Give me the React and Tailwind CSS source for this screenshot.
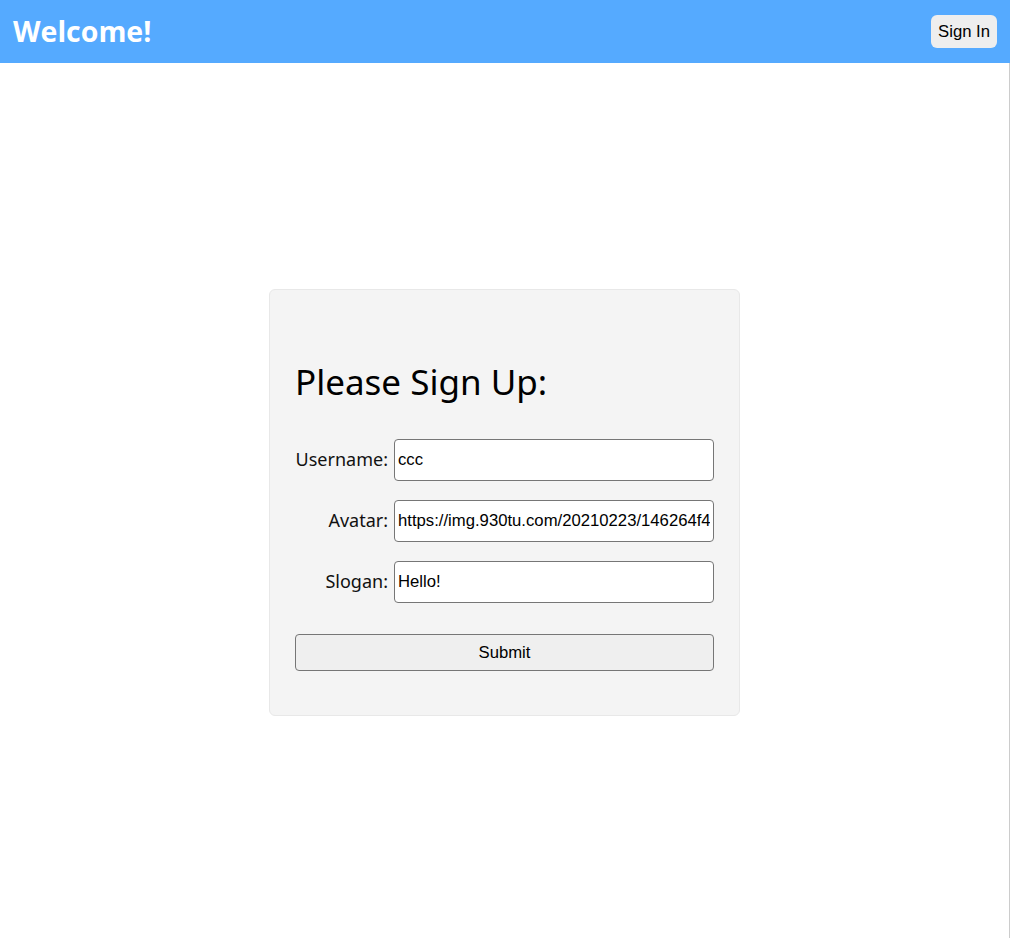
import React from 'react'

function Header() {
    return (
        <div className="flex h-[63px] items-center justify-between bg-[#55aaff] pl-[13px] pr-[13px]">
            <h1 className="font-['Open_Sans',sans-serif] text-[28.5px] font-bold text-white">Welcome!</h1>
            <button className="h-[33px] rounded-md bg-[#eeeeee] px-[7px] font-['Liberation_Sans',Arial,sans-serif] text-[16.7px] text-black">
                Sign In
            </button>
        </div>
    )
}

function Field({ label, value }) {
    return (
        <div className="flex items-center">
            <label className="w-[99px] pr-[6px] text-right text-[18px] text-[#111]">{label}</label>
            <input
                readOnly
                value={value}
                className="h-[42px] w-[320px] rounded border border-[#767676] bg-white px-[3px] font-['Liberation_Sans',Arial,sans-serif] text-[16.7px] text-black outline-none"
            />
        </div>
    )
}

export default function App() {
    return (
        <div className="min-h-[938px] bg-white font-['Noto_Sans',sans-serif]">
            <Header />
            <div className="flex h-[875px] items-center justify-center border-r border-[#cccccc] pt-[4px]">
                <div className="w-[471px] rounded-md border border-[#e8e8e8] bg-[#f4f4f4] px-[25px] pt-[66px] pb-[44px]">
                    <h2 className="text-[35px] text-black">Please Sign Up:</h2>
                    <div className="mt-[30px] flex flex-col gap-[19px]">
                        <Field label="Username:" value="ccc" />
                        <Field label="Avatar:" value="https://img.930tu.com/20210223/146264f4" />
                        <Field label="Slogan:" value="Hello!" />
                    </div>
                    <button className="mt-[31px] h-[37px] w-[419px] rounded-sm border border-[#767676] bg-[#efefef] font-['Liberation_Sans',Arial,sans-serif] text-[16.7px] text-black">
                        Submit
                    </button>
                </div>
            </div>
        </div>
    )
}
